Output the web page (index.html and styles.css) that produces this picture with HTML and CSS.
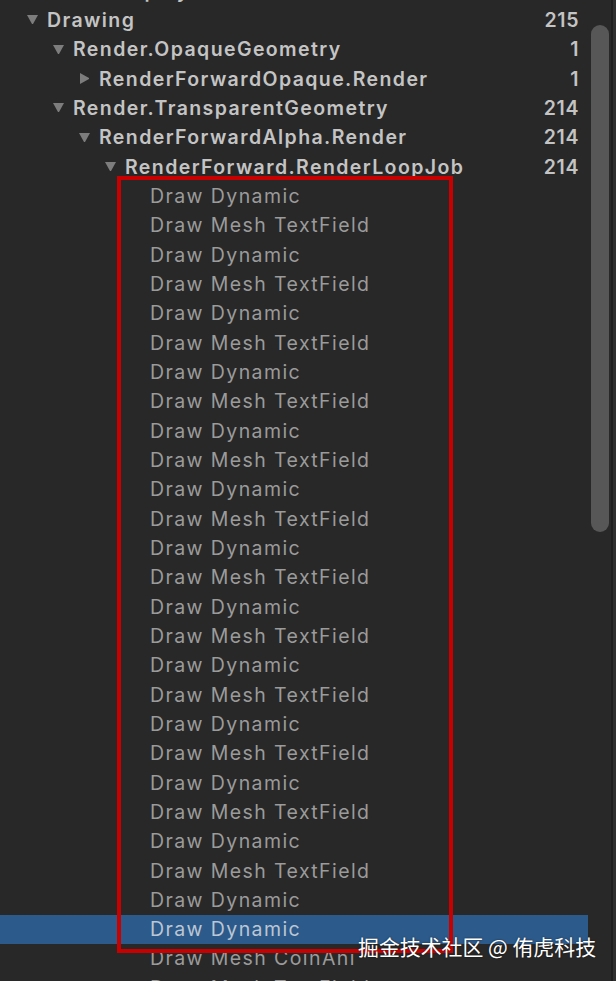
FILE: index.html
```html
<!DOCTYPE html>
<html lang="zh-CN">
<head>
    <meta charset="UTF-8">
    <meta name="viewport" content="width=device-width, initial-scale=1.0">
    <title>Profiler Hierarchy</title>
    <link rel="stylesheet" href="styles.css">
</head>
<body>
    <div class="panel">
        <!-- 层级列表 -->
        <div class="tree">
            <div class="row lm1 parent"><span class="arrow down"></span><span class="name">Camera.Display</span></div>
            <div class="row l0 parent"><span class="arrow down"></span><span class="name">Drawing</span><span class="count">215</span></div>
            <div class="row l1 parent"><span class="arrow down"></span><span class="name">Render.OpaqueGeometry</span><span class="count">1</span></div>
            <div class="row l2 parent"><span class="arrow right"></span><span class="name">RenderForwardOpaque.Render</span><span class="count">1</span></div>
            <div class="row l1 parent"><span class="arrow down"></span><span class="name">Render.TransparentGeometry</span><span class="count">214</span></div>
            <div class="row l2 parent"><span class="arrow down"></span><span class="name">RenderForwardAlpha.Render</span><span class="count">214</span></div>
            <div class="row l3 parent"><span class="arrow down"></span><span class="name">RenderForward.RenderLoopJob</span><span class="count">214</span></div>

            <div class="row l4"><span class="arrow"></span><span class="name">Draw Dynamic</span></div>
            <div class="row l4"><span class="arrow"></span><span class="name">Draw Mesh TextField</span></div>
            <div class="row l4"><span class="arrow"></span><span class="name">Draw Dynamic</span></div>
            <div class="row l4"><span class="arrow"></span><span class="name">Draw Mesh TextField</span></div>
            <div class="row l4"><span class="arrow"></span><span class="name">Draw Dynamic</span></div>
            <div class="row l4"><span class="arrow"></span><span class="name">Draw Mesh TextField</span></div>
            <div class="row l4"><span class="arrow"></span><span class="name">Draw Dynamic</span></div>
            <div class="row l4"><span class="arrow"></span><span class="name">Draw Mesh TextField</span></div>
            <div class="row l4"><span class="arrow"></span><span class="name">Draw Dynamic</span></div>
            <div class="row l4"><span class="arrow"></span><span class="name">Draw Mesh TextField</span></div>
            <div class="row l4"><span class="arrow"></span><span class="name">Draw Dynamic</span></div>
            <div class="row l4"><span class="arrow"></span><span class="name">Draw Mesh TextField</span></div>
            <div class="row l4"><span class="arrow"></span><span class="name">Draw Dynamic</span></div>
            <div class="row l4"><span class="arrow"></span><span class="name">Draw Mesh TextField</span></div>
            <div class="row l4"><span class="arrow"></span><span class="name">Draw Dynamic</span></div>
            <div class="row l4"><span class="arrow"></span><span class="name">Draw Mesh TextField</span></div>
            <div class="row l4"><span class="arrow"></span><span class="name">Draw Dynamic</span></div>
            <div class="row l4"><span class="arrow"></span><span class="name">Draw Mesh TextField</span></div>
            <div class="row l4"><span class="arrow"></span><span class="name">Draw Dynamic</span></div>
            <div class="row l4"><span class="arrow"></span><span class="name">Draw Mesh TextField</span></div>
            <div class="row l4"><span class="arrow"></span><span class="name">Draw Dynamic</span></div>
            <div class="row l4"><span class="arrow"></span><span class="name">Draw Mesh TextField</span></div>
            <div class="row l4"><span class="arrow"></span><span class="name">Draw Dynamic</span></div>
            <div class="row l4"><span class="arrow"></span><span class="name">Draw Mesh TextField</span></div>
            <div class="row l4"><span class="arrow"></span><span class="name">Draw Dynamic</span></div>
            <div class="row l4 selected"><span class="arrow"></span><span class="name">Draw Dynamic</span></div>
            <div class="row l4"><span class="arrow"></span><span class="name">Draw Mesh CoinAni</span></div>
            <div class="row l4"><span class="arrow"></span><span class="name">Draw Mesh TextField</span></div>

            <!-- 红色标注框 -->
            <div class="mark-box"></div>
        </div>

        <!-- 滚动条 -->
        <div class="scrollbar">
            <div class="thumb"></div>
        </div>
        <div class="edge"></div>

        <!-- 水印 -->
        <div class="watermark">掘金技术社区 @ 侑虎科技</div>
    </div>
</body>
</html>
```

FILE: styles.css
```css
body {
    margin: 0;
    background-color: #282828;
    font-family: Inter, "Noto Sans", "Noto Sans CJK SC", sans-serif;
    overflow: hidden;
}
.panel {
    display: flex;
    height: 981px;
    position: relative;
    overflow: hidden;
}
.tree {
    flex: 1;
    margin-top: -24px;
    position: relative;
}
.row {
    display: flex;
    align-items: center;
    height: 29.33px;
    padding-right: 9px;
    font-size: 19.5px;
    letter-spacing: 1.4px;
    color: #9b9b9b;
    white-space: nowrap;
}
.row.parent {
    color: #c4c4c4;
    font-weight: 600;
}
.row.selected {
    background-color: #2c5a8a;
    color: #bcc6d4;
}
/* 缩进层级 */
.lm1 { padding-left: 1px; }
.l0 { padding-left: 27px; }
.l1 { padding-left: 53px; }
.l2 { padding-left: 79px; }
.l3 { padding-left: 105px; }
.l4 { padding-left: 130px; }
.arrow {
    width: 11px;
    height: 9px;
    margin-right: 9px;
    box-sizing: border-box;
}
.arrow.down {
    border-left: 5.5px solid transparent;
    border-right: 5.5px solid transparent;
    border-top: 9px solid #7d7d7d;
}
.arrow.right {
    width: 9px;
    height: 11px;
    margin-left: 1px;
    margin-right: 10px;
    border-top: 5.5px solid transparent;
    border-bottom: 5.5px solid transparent;
    border-left: 9px solid #7d7d7d;
}
.name {
    flex: 1;
}
.count {
    text-align: right;
    letter-spacing: 0.6px;
}
.mark-box {
    position: absolute;
    left: 117px;
    top: 200px;
    width: 336px;
    height: 777px;
    box-sizing: border-box;
    border: 4px solid #c80000;
}
.scrollbar {
    width: 23px;
    padding-top: 25px;
    box-sizing: border-box;
    display: flex;
    justify-content: center;
}
.thumb {
    width: 18px;
    height: 507px;
    border-radius: 9px;
    background-color: #575757;
}
.edge {
    width: 5px;
    border-left: 2px solid #1e1e1e;
    background-color: #2e2e2e;
    box-sizing: border-box;
}
.watermark {
    position: absolute;
    left: 358px;
    top: 931px;
    font-size: 20.9px;
    color: #ffffff;
    font-family: "Noto Sans CJK SC", sans-serif;
    text-shadow: 0 0 2px rgba(0, 0, 0, 0.6);
    white-space: nowrap;
}
```
